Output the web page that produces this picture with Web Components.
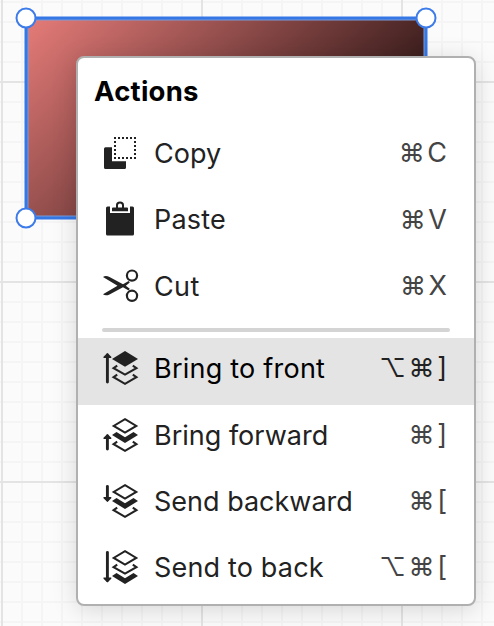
<!DOCTYPE html>
<html lang="en"><head><meta charset="utf-8"><title>Actions</title>
<style>html,body{margin:0;width:494px;height:626px;overflow:hidden;background:#fbfbfb;font-family:Inter,"Liberation Sans",sans-serif}</style></head>
<body>
<canvas-board>
<context-menu heading="Actions">
<menu-action icon="copy" label="Copy" keys="⌘C"></menu-action>
<menu-action icon="paste" label="Paste" keys="⌘V" style="height:67px;--track:.2px"></menu-action>
<menu-action icon="cut" label="Cut" keys="⌘X" style="--track:.4px"></menu-action>
<menu-divider></menu-divider>
<menu-action icon="front" label="Bring to front" keys="⌥⌘]" active style="--track:.23px"></menu-action>
<menu-action icon="forward" label="Bring forward" keys="⌘]"></menu-action>
<menu-action icon="backward" label="Send backward" keys="⌘["></menu-action>
<menu-action icon="back" label="Send to back" keys="⌥⌘[" style="--track:.17px"></menu-action>
</context-menu>
</canvas-board>
<script>
const layers={
 topFill:'<path d="M21 1 34 8.9 21 16.8 8 8.9Z" fill="currentColor"/>',
 topLine:'<path d="M21 2.2 32.3 8.9 21 15.6 9.7 8.9Z" fill="none" stroke="currentColor" stroke-width="2"/>',
 midLine:'<path d="M13.2 15.7 9.6 18.1 21 24.6 32.4 18.1 28.8 15.7" fill="none" stroke="currentColor" stroke-width="2.1"/>',
 midFill:'<path d="M12.5 15.1 8 18.1 21 26 34 18.1 29.5 15.1 21 20.3Z" fill="currentColor"/>',
 botLine:'<path d="M13.2 24.7 9.6 27.1 21 33.8 32.4 27.1 28.8 24.7" fill="none" stroke="currentColor" stroke-width="2.1"/>',
 botFill:'<path d="M12.5 24.1 8 27.1 21 35 34 27.1 29.5 24.1 21 29.3Z" fill="currentColor"/>'
};
const arrow=(tail,tip)=>{const d=tip>tail?-1:1;return `<path d="M3.4 ${tail}V${tip+d*2}" stroke="currentColor" stroke-width="2.9" stroke-linecap="round"/><path d="M-.5 ${tip+d*5}V${tip+d*3.8}L3.4 ${tip} 7.3 ${tip+d*3.8}V${tip+d*5}Z" fill="currentColor"/>`};
const stack=(...parts)=>`<g transform="translate(0 1)">${parts.join('')}</g>`;
const icons={
 copy:'<path d="M1.5 13.2H8V27.2H22V33.5Q22 35 20.5 35H1.5Q0 35 0 33.5V14.7Q0 13.2 1.5 13.2Z" fill="currentColor"/><path d="M10 4H32M10 24H32" stroke="currentColor" stroke-width="2" stroke-dasharray="2 2"/><path d="M11 7V23M31 7V23" stroke="currentColor" stroke-width="2" stroke-dasharray="2 2"/>',
 paste:'<g transform="translate(0 -.5)"><path d="M3.5 6H6V12.5H26V6H28.5Q30 6 30 7.5V33.5Q30 35 28.5 35H3.5Q2 35 2 33.5V7.5Q2 6 3.5 6Z" fill="currentColor"/><path d="M9 7H12V4.5Q12 1 16 1T20 4.5V7H23Q24 7 24 8V10.7H8V8Q8 7 9 7ZM14 7H18V4.7Q18 3 16 3T14 4.7Z" fill="currentColor" fill-rule="evenodd"/></g>',
 cut:'<path d="M-1 10.1Q1.5 8.2 5.5 10L19 17.2 24.6 13.9 25.8 15.5 21.8 18.7 25.8 21.8 24.6 23.4 19 20.2 5.5 27.4Q1.5 29.2-1 27.3L13.5 18.7Z" fill="currentColor"/><circle cx="28" cy="8.6" r="5.1" fill="none" stroke="currentColor" stroke-width="2.2"/><circle cx="28" cy="28.8" r="5.1" fill="none" stroke="currentColor" stroke-width="2.2"/>',
 front:stack(arrow(32,3),layers.topFill,layers.midLine,layers.botLine),
 forward:stack(arrow(32,17),layers.topLine,layers.midFill,layers.botLine),
 backward:stack(arrow(3.5,19),layers.topLine,layers.midFill,layers.botLine),
 back:stack(arrow(3.5,33.5),layers.topLine,layers.midLine,layers.botFill)
};
customElements.define('menu-icon',class extends HTMLElement{connectedCallback(){
 this.attachShadow({mode:'open'}).innerHTML=`<style>:host{display:block;width:34px;height:38px}svg{display:block;overflow:visible}</style><svg width="34" height="38" viewBox="0 0 34 38">${icons[this.getAttribute('name')]}</svg>`;
}});
customElements.define('menu-action',class extends HTMLElement{connectedCallback(){
 const keys=this.getAttribute('keys').replace(/[⌘⌥]+/,'<span class="mod">$&</span>');
 this.attachShadow({mode:'open'}).innerHTML=`<style>:host{display:flex;align-items:center;height:66px;padding:0 25px 6px 26px;box-sizing:border-box;color:#222;font-size:27px}:host([active]){height:67px;padding-bottom:7px;background:#e4e4e4;color:#000}menu-icon{color:#222;margin-right:16px}.label{flex:1;white-space:nowrap;letter-spacing:var(--track,0)}.keys{color:#444;letter-spacing:2px;white-space:nowrap;padding-bottom:1px}.mod{font-size:26px;letter-spacing:2.6px}:host([active]) .keys{color:#222}</style><menu-icon name="${this.getAttribute('icon')}"></menu-icon><span class="label">${this.getAttribute('label')}</span><span class="keys">${keys}</span>`;
}});
customElements.define('menu-divider',class extends HTMLElement{connectedCallback(){
 this.attachShadow({mode:'open'}).innerHTML='<style>:host{display:block;height:4px;border-radius:2px;background:#d4d4d4;margin:6px 24px}</style>';
}});
customElements.define('context-menu',class extends HTMLElement{connectedCallback(){
 this.attachShadow({mode:'open'}).innerHTML=`<style>:host{position:absolute;left:76px;top:56px;width:400px;height:550px;box-sizing:border-box;border:2px solid #b0b0b0;border-radius:8px;background:#fff;box-shadow:0 4px 24px rgba(0,0,0,.15);overflow:hidden}h1{margin:0;padding:0 16px;height:65px;line-height:66px;font-size:27.5px;font-weight:700;letter-spacing:.25px}</style><h1>${this.getAttribute('heading')}</h1><slot></slot>`;
}});
customElements.define('canvas-board',class extends HTMLElement{connectedCallback(){
 this.attachShadow({mode:'open'}).innerHTML=`<style>:host{display:block;position:relative;width:494px;height:626px;overflow:hidden}svg{display:block}</style>
<svg width="494" height="626"><defs>
<pattern id="minor" x="1" y="1" width="20" height="20" patternUnits="userSpaceOnUse"><path d="M0 0H20V2H2V20H0Z" fill="#f5f5f5"/></pattern>
<pattern id="major" x="1" y="81" width="200" height="200" patternUnits="userSpaceOnUse"><path d="M0 0H200V2H2V200H0Z" fill="#e4e4e4"/></pattern>
<linearGradient id="shade" gradientUnits="userSpaceOnUse" x1="26" y1="18" x2="316" y2="308"><stop offset="0" stop-color="#e67c79"/><stop offset="1" stop-color="#050000"/></linearGradient></defs>
<rect width="494" height="626" fill="#fbfbfb"/><rect width="494" height="626" fill="url(#minor)"/><rect width="494" height="626" fill="url(#major)"/>
<rect x="26" y="18" width="400" height="200" fill="url(#shade)"/>
<rect x="27.5" y="19.5" width="397" height="197" fill="none" stroke="#7b9bda" stroke-width="2"/>
<rect x="26" y="18" width="400" height="200" fill="none" stroke="#3577e5" stroke-width="3"/>
<g fill="#fff" stroke="#3d7be9" stroke-width="2"><circle cx="26" cy="18" r="9.5"/><circle cx="426" cy="18" r="9.5"/><circle cx="26" cy="218" r="9.5"/></g></svg><slot></slot>`;
}});
</script></body></html>
